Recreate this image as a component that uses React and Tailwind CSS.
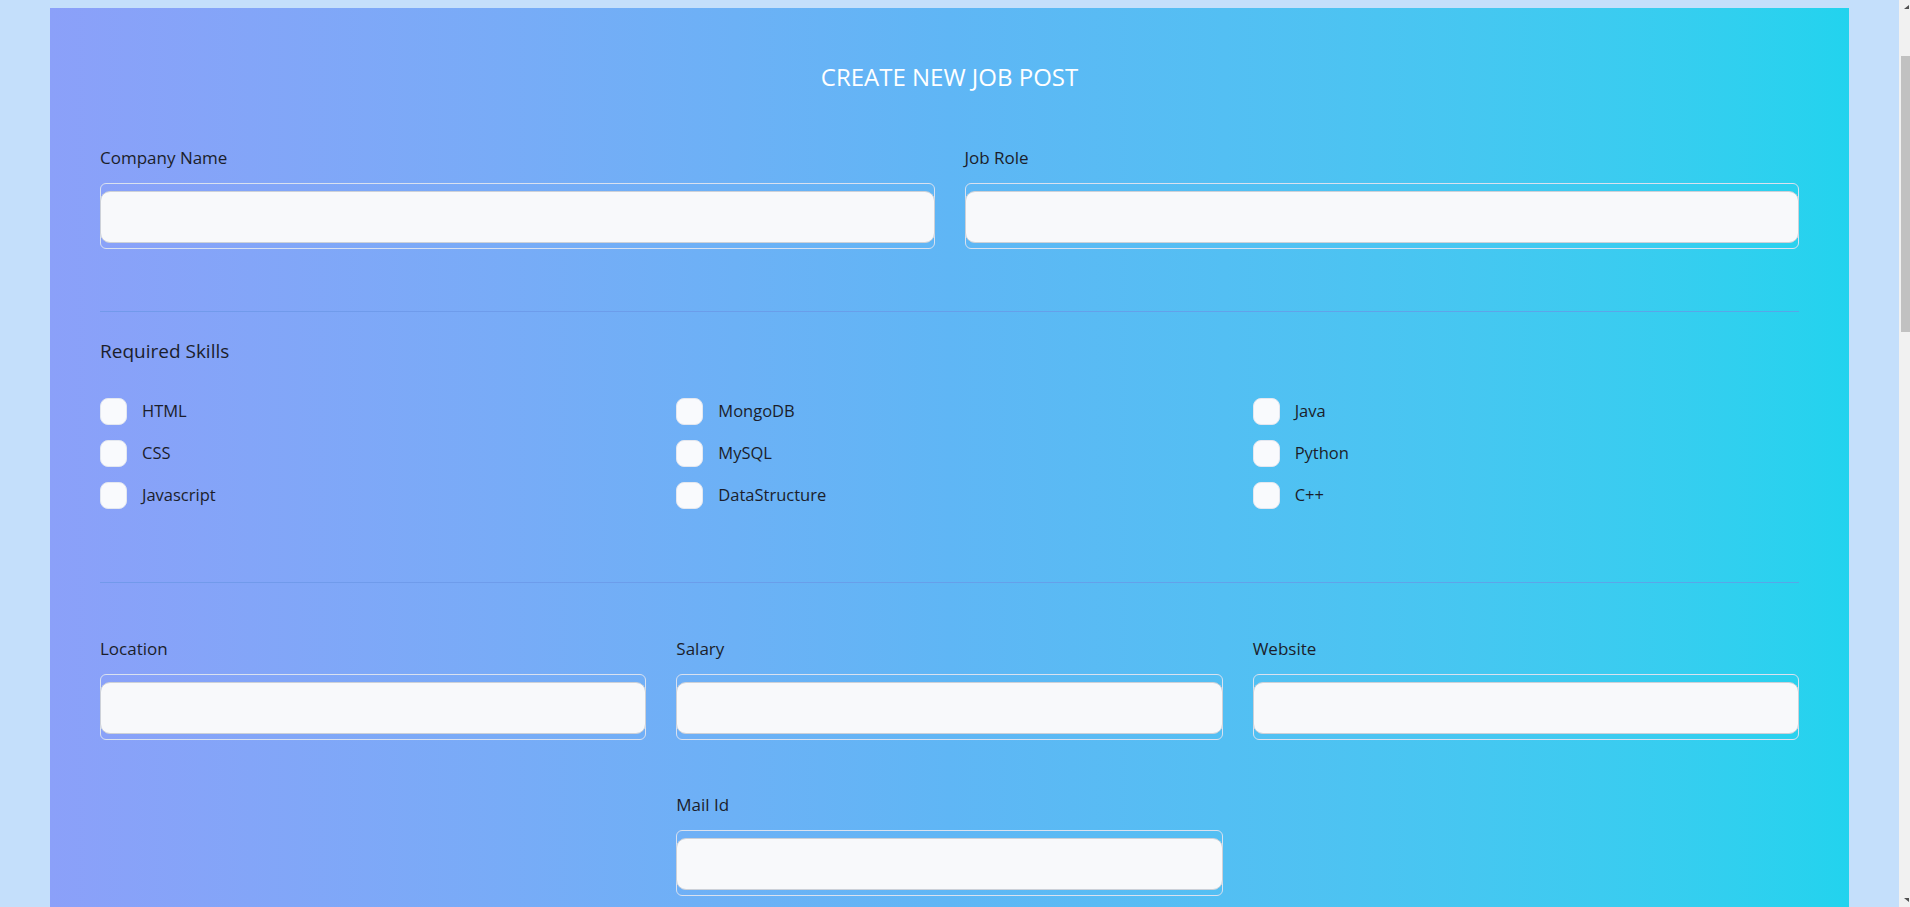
import React from 'react';

const skills = [
    ['HTML', 'CSS', 'Javascript'],
    ['MongoDB', 'MySQL', 'DataStructure'],
    ['Java', 'Python', 'C++'],
];

const Field = ({ label }) => (
    <div className="flex flex-col">
        <label className="text-[17px] leading-6 text-[#1b1e2b] mb-[13px]">{label}</label>
        <div className="border border-[#d9e1ef] rounded-[6px] pt-[7px] pb-[5px]">
            <input
                type="text"
                className="block -mx-px w-[calc(100%+2px)] h-[52px] rounded-[10px] bg-[#f8f9fb] border border-[#cdd1d8] outline-none px-3"
            />
        </div>
    </div>
);

const SkillBox = ({ name }) => (
    <label className="flex items-center h-[42px]">
        <span className="w-[27px] h-[27px] rounded-[8px] bg-[#f9fafd] border border-[#e3e7f0]" />
        <span className="ml-[15px] text-[16.5px] text-[#1b1e2b]">{name}</span>
    </label>
);

export default function App() {
    return (
        <div className="h-[907px] overflow-hidden flex bg-[#c4dffb]" style={{ fontFamily: '"Open Sans", "Noto Sans", sans-serif' }}>
            <div className="flex-1 pt-2 pl-[50px] pr-[50px]">
                <div className="bg-linear-to-r from-[#8ba0f9] via-[#5fb6f5] to-[#22d3ee] px-[50px] pt-[53px] pb-10 min-h-[1100px]">
                    <h1 className="text-center text-white text-[24px] leading-8 font-normal">CREATE NEW JOB POST</h1>

                    <div className="grid grid-cols-2 gap-[30px] mt-[53px]">
                        <Field label="Company Name" />
                        <Field label="Job Role" />
                    </div>

                    <hr className="mt-[62px] border-0 border-t border-[#6a95e6]/70" />

                    <h2 className="mt-[27px] text-[19px] leading-6 text-[#1b1e2b]">Required Skills</h2>

                    <div className="grid grid-cols-3 gap-x-[30px] mt-[27px]">
                        {skills.map((col, i) => (
                            <div key={i} className="flex flex-col">
                                {col.map((s) => <SkillBox key={s} name={s} />)}
                            </div>
                        ))}
                    </div>

                    <hr className="mt-[66px] border-0 border-t border-[#6a95e6]/70" />

                    <div className="grid grid-cols-3 gap-x-[30px] gap-y-[53px] mt-[54px]">
                        <Field label="Location" />
                        <Field label="Salary" />
                        <Field label="Website" />
                        <div />
                        <Field label="Mail Id" />
                    </div>
                </div>
            </div>

            {/* fake scrollbar */}
            <div className="w-[11px] bg-[#f1f1f1] flex flex-col items-end">
                <div className="h-[14px] w-full flex justify-end items-center pr-[1px]">
                    <div className="w-0 h-0 border-l-[5px] border-l-transparent border-b-[4px] border-b-[#505050]" />
                </div>
                <div className="mt-[42px] w-[9px] h-[276px] bg-[#c1c1c1]" />
                <div className="flex-1" />
                <div className="h-[14px] w-full flex justify-end items-center pr-[1px]">
                    <div className="w-0 h-0 border-l-[5px] border-l-transparent border-t-[4px] border-t-[#505050]" />
                </div>
            </div>
        </div>
    );
}
